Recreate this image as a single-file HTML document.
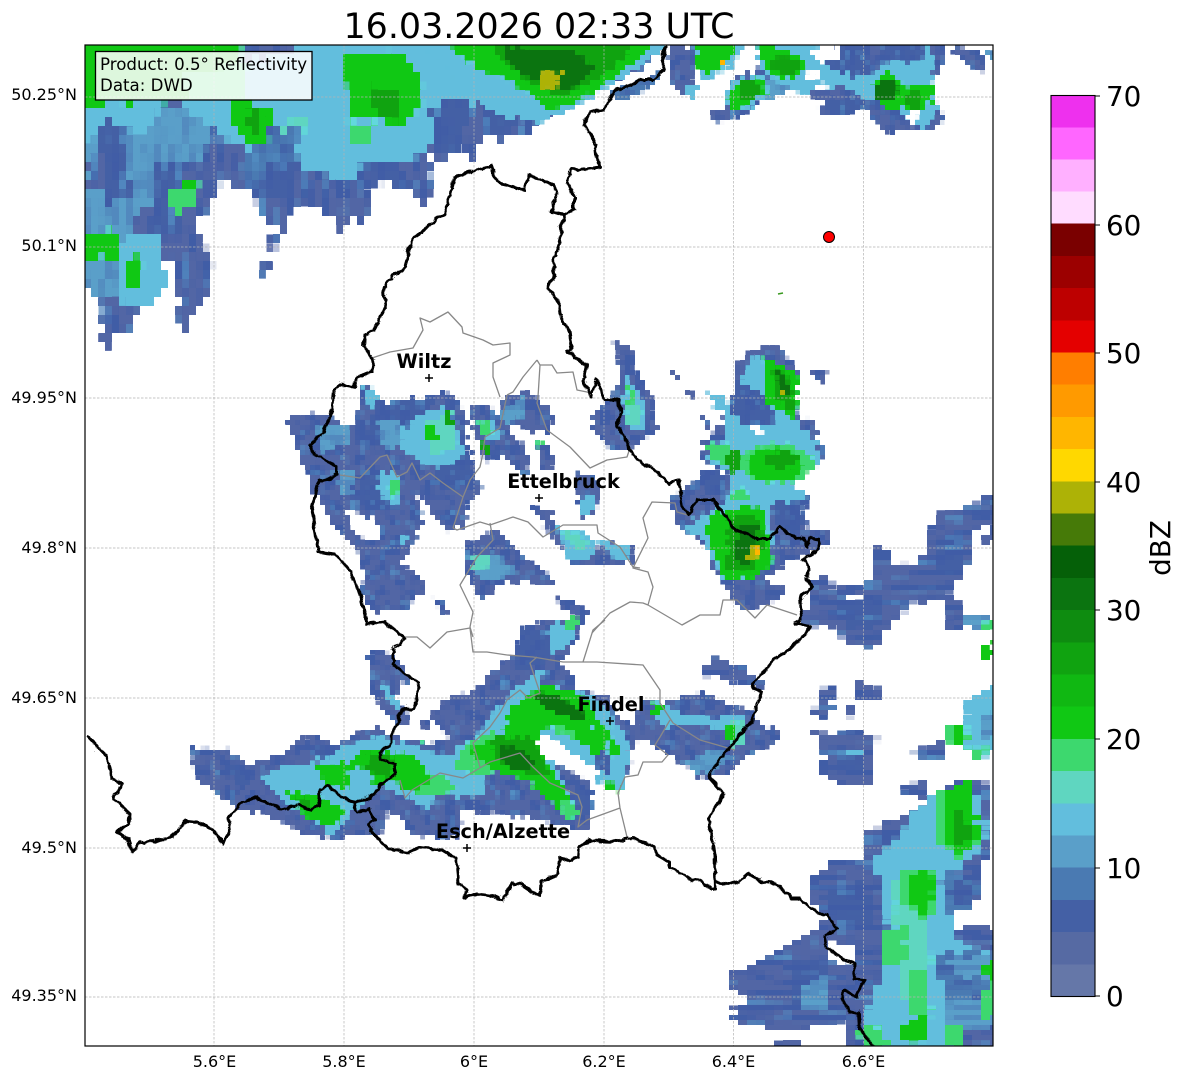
<!DOCTYPE html>
<html><head><meta charset="utf-8"><style>
html,body{margin:0;padding:0;background:#fff}
svg{display:block}
text{font-family:"DejaVu Sans",sans-serif;fill:#000}
.b{fill:#5266a5}.d{fill:#4460a5}.m{fill:#4a7ab2}.n{fill:#5a9fc9}.c{fill:#62bedd}.t{fill:#5fd6c0}
.l{fill:#3dd86e}.g{fill:#10c814}.h{fill:#10a310}.k{fill:#0b7410}.w{fill:#fff}
.y{fill:#adb206}.o{fill:#ffb600}
</style></head><body>
<svg width="1184" height="1081" viewBox="0 0 1184 1081" xmlns="http://www.w3.org/2000/svg">
<defs>
<clipPath id="ax"><rect x="85" y="45" width="908" height="1001"/></clipPath>
<filter id="wig" filterUnits="userSpaceOnUse" x="0" y="0" width="1184" height="1081" color-interpolation-filters="sRGB">
<feTurbulence type="turbulence" baseFrequency="0.09" numOctaves="1" seed="9"/>
<feDisplacementMap in="SourceGraphic" scale="5" xChannelSelector="R" yChannelSelector="G"/>
<feGaussianBlur stdDeviation=".35"/>
</filter>
<filter id="fv" filterUnits="userSpaceOnUse" x="0" y="0" width="1184" height="1081" color-interpolation-filters="sRGB">
<feTurbulence type="turbulence" baseFrequency="0.12" numOctaves="2" seed="4" result="w"/>
<feDisplacementMap in="SourceGraphic" in2="w" scale="10" xChannelSelector="R" yChannelSelector="G" result="s"/>
<feColorMatrix in="s" values="0 0 0 0 0 0 0 0 0 0 0 0 0 0 0 0 -8 8 0 -1" result="mk"/>
<feTurbulence type="fractalNoise" baseFrequency="0.14 0.035" numOctaves="1" seed="11"/>
<feColorMatrix values="0 0 0 0 .25 0 0 0 0 .36 0 0 0 0 .65 7 0 0 0 -3.3" result="n1"/>
<feTurbulence type="fractalNoise" baseFrequency="0.12 0.04" numOctaves="1" seed="23"/>
<feColorMatrix values="0 0 0 0 .33 0 0 0 0 .58 0 0 0 0 .78 5 0 0 0 -2.9" result="n2"/>
<feComposite in="n1" in2="mk" operator="in" result="a1"/>
<feComposite in="n2" in2="mk" operator="in" result="a2"/>
<feComposite in="a1" in2="s" operator="atop" result="t1"/>
<feComposite in="a2" in2="t1" operator="atop" result="t2"/>
<feFlood x="3" y="4" width="1" height="1"/>
<feComposite x="0" y="0" width="7" height="9"/>
<feTile result="a"/>
<feComposite in="t2" in2="a" operator="in"/>
<feMorphology operator="dilate" radius="3 4"/>
</filter>
<filter id="fd" filterUnits="userSpaceOnUse" x="0" y="0" width="1184" height="1081" color-interpolation-filters="sRGB">
<feTurbulence type="turbulence" baseFrequency="0.13" numOctaves="2" seed="4" result="w"/>
<feDisplacementMap in="SourceGraphic" in2="w" scale="8" xChannelSelector="R" yChannelSelector="G" result="s"/>
<feColorMatrix in="s" values="0 0 0 0 0 0 0 0 0 0 0 0 0 0 0 0 -8 8 0 -1" result="mk"/>
<feTurbulence type="fractalNoise" baseFrequency="0.09" numOctaves="1" seed="15"/>
<feColorMatrix values="0 0 0 0 .25 0 0 0 0 .36 0 0 0 0 .65 7 0 0 0 -3.3" result="n1"/>
<feTurbulence type="fractalNoise" baseFrequency="0.1" numOctaves="1" seed="31"/>
<feColorMatrix values="0 0 0 0 .33 0 0 0 0 .58 0 0 0 0 .78 5 0 0 0 -3" result="n2"/>
<feComposite in="n1" in2="mk" operator="in" result="a1"/>
<feComposite in="n2" in2="mk" operator="in" result="a2"/>
<feComposite in="a1" in2="s" operator="atop" result="t1"/>
<feComposite in="a2" in2="t1" operator="atop" result="t2"/>
<feFlood x="2" y="2" width="1" height="1"/>
<feComposite x="0" y="0" width="5" height="5"/>
<feTile result="a"/>
<feComposite in="t2" in2="a" operator="in"/>
<feMorphology operator="dilate" radius="2 2"/>
</filter>
<filter id="fh" filterUnits="userSpaceOnUse" x="0" y="0" width="1184" height="1081" color-interpolation-filters="sRGB">
<feTurbulence type="turbulence" baseFrequency="0.1" numOctaves="2" seed="7" result="w"/>
<feDisplacementMap in="SourceGraphic" in2="w" scale="9" xChannelSelector="R" yChannelSelector="G" result="s"/>
<feColorMatrix in="s" values="0 0 0 0 0 0 0 0 0 0 0 0 0 0 0 0 -8 8 0 -1" result="mk"/>
<feTurbulence type="fractalNoise" baseFrequency="0.03 0.2" numOctaves="1" seed="5"/>
<feColorMatrix values="0 0 0 0 .25 0 0 0 0 .36 0 0 0 0 .65 7 0 0 0 -3.3" result="n1"/>
<feTurbulence type="fractalNoise" baseFrequency="0.035 0.18" numOctaves="1" seed="41"/>
<feColorMatrix values="0 0 0 0 .33 0 0 0 0 .58 0 0 0 0 .78 5 0 0 0 -3" result="n2"/>
<feComposite in="n1" in2="mk" operator="in" result="a1"/>
<feComposite in="n2" in2="mk" operator="in" result="a2"/>
<feComposite in="a1" in2="s" operator="atop" result="t1"/>
<feComposite in="a2" in2="t1" operator="atop" result="t2"/>
<feFlood x="4" y="2" width="1" height="1"/>
<feComposite x="0" y="0" width="9" height="5"/>
<feTile result="a"/>
<feComposite in="t2" in2="a" operator="in"/>
<feMorphology operator="dilate" radius="4 2"/>
</filter>
</defs>
<rect width="1184" height="1081" fill="#fff"/>
<text x="539" y="38" font-size="34.85" text-anchor="middle">16.03.2026 02:33 UTC</text>

<g clip-path="url(#ax)">
<g filter="url(#fv)">
<!-- Top-left mass -->
<polygon class="b" points="70,30 680,30 640,62 600,85 580,90 527,128 510,135 477,140 470,162 450,133 443,157 427,153 430,187 427,203 418,202 405,185 393,178 363,183 370,213 363,222 345,213 340,230 313,203 290,203 280,237 268,253 262,278 255,280 267,247 280,220 262,220 250,188 237,188 220,177 213,197 192,220 197,240 203,230 210,273 205,293 192,310 185,332 178,330 172,253 163,257 150,300 135,313 133,325 110,330 110,343 100,342 98,293 86,282 70,282"/>
<polygon class="w" points="123,120 147,122 146,138 132,143 124,140"/>
<polygon class="n" points="70,110 170,105 210,125 200,150 160,190 130,225 130,280 100,295 70,280"/>
<polygon class="c" points="120,230 160,235 165,285 135,312 120,300 115,260"/>
<polygon class="c" points="70,100 160,100 150,125 100,140 70,130"/>
<polygon class="d" points="100,120 130,125 120,160 135,190 105,200 95,160"/>
<polygon class="d" points="150,160 185,160 180,230 150,230"/>
<polygon class="b" points="85,150 100,150 105,190 85,190"/>
<polygon class="c" points="180,100 240,60 312,45 470,40 500,70 480,100 455,115 430,145 415,150 395,165 340,175 310,170 280,150 250,150 210,125"/>
<polygon class="t" points="280,120 305,118 300,140 282,142"/>
<polygon class="m" points="265,125 300,130 285,175 250,190 235,165"/>
<polygon class="d" points="262,160 295,155 290,195 250,195"/>
<polygon class="d" points="355,160 395,160 420,190 380,180"/>
<polygon class="d" points="430,110 450,95 470,100 455,150 435,150"/>
<polygon class="d" points="480,115 510,105 515,125 480,138"/>
<polygon class="l" points="345,118 372,122 368,140 350,140"/>
<polygon class="g" points="340,50 395,48 420,75 420,105 390,125 375,115 350,110 345,85"/>
<polygon class="h" points="365,80 400,95 395,120 370,110"/>
<polygon class="g" points="230,95 270,105 265,150 235,135"/>
<polygon class="h" points="245,105 260,110 255,130 245,125"/>
<polygon class="g" points="70,228 115,228 115,255 70,255"/>
<polygon class="g" points="125,260 140,250 140,285 125,285"/>
<polygon class="l" points="195,170 190,205 170,215 165,190"/>
<polygon class="g" points="180,175 200,175 195,190 180,188"/>
<!-- green under legend -->
<polygon class="g" points="70,30 240,30 235,70 180,98 95,102 70,110"/>
<polygon class="l" points="180,70 250,60 240,95 190,100"/>
</g>
<g filter="url(#fd)">
<!-- top dark band -->
<polygon class="c" points="395,30 680,30 630,70 590,95 540,120 510,118 475,100 440,60"/>
<polygon class="g" points="430,30 660,30 640,55 600,85 575,100 545,108 510,80 480,70"/>
<polygon class="h" points="490,30 640,30 620,60 590,80 560,95 525,80 495,55"/>
<polygon class="k" points="500,45 570,48 595,68 570,88 530,78 505,62"/>
<polygon class="y" points="535,72 562,70 558,82 540,88"/>
<polygon class="m" points="610,90 650,75 660,65 650,85 620,100"/>
<polygon class="b" points="668,45 700,45 690,75 695,90 685,95 665,78"/>
<polygon class="c" points="680,80 698,82 692,95 685,93"/>
<polygon class="c" points="690,40 745,40 725,70 700,78"/>
<polygon class="g" points="695,40 735,40 730,58 710,72 695,65"/>
<circle class="o" cx="719" cy="61" r="3.5"/>
<!-- top right -->
<polygon class="b" points="755,35 940,35 945,60 930,77 933,100 945,120 920,130 903,125 893,133 880,125 860,103 838,115 812,110 823,100 810,98 808,87 787,83 773,95 767,90 747,110 733,115 712,120 710,110 723,107 723,93 733,73 757,70"/>
<polygon class="c" points="755,35 850,35 870,70 890,60 930,40 930,75 935,110 920,130 905,118 885,90 870,100 840,85 800,90 770,80 758,70"/>
<polygon class="d" points="815,40 865,40 870,70 850,75 820,60"/>
<polygon class="d" points="880,38 925,48 920,60 885,60"/>
<polygon class="w" points="810,48 838,45 838,60 815,60"/>
<polygon class="w" points="802,70 818,68 815,75 803,76"/>
<polygon class="w" points="812,85 823,80 825,85 815,90"/>
<polygon class="d" points="825,95 870,100 845,113 820,110"/>
<polygon class="n" points="760,75 790,85 775,97 755,95"/>
<polygon class="g" points="755,40 790,50 805,65 785,80 765,70"/>
<ellipse class="h" cx="783" cy="64" rx="16" ry="9"/>
<polygon class="c" points="730,80 760,72 768,90 745,108 725,105 722,95"/>
<polygon class="g" points="737,80 760,75 765,92 748,100 730,110 725,95"/>
<ellipse class="h" cx="748" cy="88" rx="10" ry="10"/>
<polygon class="g" points="870,80 887,70 905,85 935,80 930,100 915,110 905,105 890,110 872,95"/>
<ellipse class="k" cx="885" cy="88" rx="12" ry="12"/>
<ellipse class="h" cx="912" cy="98" rx="8" ry="10"/>
<polygon class="w" points="905,110 915,108 912,125 905,120"/>
<polygon class="d" points="960,45 978,52 985,68 972,70"/>
<polygon class="b" points="945,45 962,47 980,62 982,70 965,62"/>
<polygon class="n" points="985,45 995,55 992,62 982,48"/>
<!-- West/Centre blob -->
<polygon class="b" points="285,417 325,412 345,425 355,420 358,383 368,382 383,400 407,400 440,390 457,397 465,420 465,453 480,487 467,500 463,523 443,530 427,503 413,490 423,523 407,547 397,560 427,583 400,603 373,610 357,587 367,577 353,547 330,520 310,487 300,457"/>
<polygon class="w" points="345,505 358,510 380,528 375,540 362,535 350,530"/>
<polygon class="d" points="375,400 420,400 440,395 420,412 390,440 355,450"/>
<polygon class="d" points="355,465 400,475 395,510 360,500"/>
<polygon class="d" points="430,450 470,450 470,485 435,490"/>
<polygon class="c" points="390,437 420,413 443,403 457,430 463,453 440,467 413,457"/>
<polygon class="t" points="425,420 450,410 455,445 430,455"/>
<polygon class="n" points="375,420 395,415 400,440 385,450"/>
<polygon class="g" points="422,425 433,420 436,435 425,438"/>
<polygon class="h" points="443,410 450,412 450,425 445,425"/>
<polygon class="n" points="315,425 345,425 348,440 320,450"/>
<polygon class="n" points="335,470 350,468 350,490 338,492"/>
<polygon class="c" points="375,470 395,470 400,500 382,505"/>
<polygon class="l" points="385,480 395,480 397,492 388,495"/>
<polygon class="c" points="362,385 372,385 378,400 368,405"/>
<polygon class="c" points="398,535 404,532 404,542 399,540"/>
<polygon class="b" points="355,586 395,585 430,582 405,605 372,612"/>
<polygon class="b" points="430,597 440,596 447,608 440,612"/>
<!-- Centre -->
<polygon class="b" points="497,400 525,388 553,413 547,430 527,430 507,420"/>
<polygon class="n" points="497,408 522,395 525,415 500,420"/>
<polygon class="b" points="468,400 490,405 505,425 530,455 525,475 502,452 483,460 470,425"/>
<polygon class="c" points="474,418 490,418 500,432 488,440"/>
<polygon class="l" points="475,420 485,422 490,432 480,432"/>
<polygon class="h" points="479,442 485,442 488,454 482,454"/>
<polygon class="b" points="533,440 548,445 552,465 542,470"/>
<polygon class="l" points="535,440 542,442 541,450 536,448"/>
<polygon class="b" points="527,503 547,507 560,530 580,553 610,540 630,543 633,560 613,563 573,563 547,530"/>
<polygon class="c" points="555,525 580,530 595,545 585,560 565,555"/>
<polygon class="t" points="560,530 575,530 590,545 575,548"/>
<polygon class="c" points="597,540 625,542 630,555 610,556"/>
<polygon class="b" points="574,473 590,472 600,490 595,510 582,520 575,500"/>
<polygon class="c" points="577,500 590,490 594,505 582,515"/>
<polygon class="b" points="463,543 493,527 513,547 547,573 557,587 533,580 500,580 480,600 463,570"/>
<polygon class="n" points="468,555 490,550 515,570 490,580 475,575"/>
<polygon class="t" points="470,555 485,553 488,565 472,568"/>
<polygon class="b" points="553,595 570,597 587,610 582,615 560,605"/>
<!-- Column near border -->
<polygon class="b" points="612,338 628,345 635,372 650,395 655,430 632,442 622,450 605,445 590,425 590,410 610,395 618,370"/>
<polygon class="c" points="622,370 640,395 645,425 630,432 620,410"/>
<polygon class="t" points="625,385 640,410 635,425 625,420"/>
<polygon class="l" points="625,382 635,392 632,405 625,400"/>
<polygon class="b" points="668,367 680,375 678,378 668,372"/>
<polygon class="b" points="684,387 693,392 691,395 683,391"/>
<polygon class="c" points="704,390 720,392 727,405 714,408"/>
<polygon class="b" points="698,412 703,412 708,424 703,426"/>
<polygon class="b" points="807,367 824,366 827,380 815,380"/>
<!-- East storm -->
<polygon class="b" points="770,342 787,355 798,373 790,397 800,417 813,420 817,440 823,443 817,462 810,467 787,483 810,493 800,510 803,527 828,530 827,543 783,560 777,570 757,577 757,590 773,600 737,607 723,587 720,577 707,563 710,547 677,525 672,513 668,495 703,473 730,473 698,457 703,440 713,430 725,410 733,390 732,363 750,350"/>
<polygon class="c" points="753,353 797,373 793,417 817,443 817,462 787,483 807,493 797,500 767,503 773,530 770,560 747,580 720,577 713,560 703,540 680,527 707,510 722,500 733,473 700,457 723,437 723,413 733,390"/>
<polygon class="d" points="733,375 765,395 775,420 750,425 728,412"/>
<polygon class="d" points="700,470 725,470 720,495 700,495"/>
<polygon class="d" points="770,495 800,505 805,525 775,525"/>
<polygon class="w" points="750,424 762,422 760,432 752,432"/>
<polygon class="g" points="760,353 797,373 793,418 763,400 763,373"/>
<polygon class="h" points="770,362 790,380 790,412 775,395"/>
<polygon class="k" points="775,365 785,378 788,395 775,385"/>
<circle class="y" cx="781" cy="390" r="3.5"/>
<polygon class="l" points="705,440 725,440 730,465 705,458"/>
<ellipse class="h" cx="732" cy="458" rx="9" ry="12"/>
<ellipse class="l" cx="775" cy="462" rx="36" ry="20"/>
<ellipse class="g" cx="773" cy="463" rx="28" ry="17"/>
<ellipse class="h" cx="780" cy="458" rx="16" ry="9"/>
<polygon class="l" points="728,490 745,484 745,497 730,500"/>
<polygon class="g" points="707,513 747,503 763,510 767,537 770,563 747,578 722,578 713,557 703,527"/>
<polygon class="h" points="725,515 755,512 765,540 750,572 725,565"/>
<polygon class="k" points="738,525 758,525 755,550 745,565 730,558"/>
<rect class="y" x="748" y="545" width="9" height="13"/>
<circle class="o" cx="754" cy="550" r="2.5"/>
<polygon class="b" points="745,580 760,575 785,590 773,600 737,607 723,587"/>
<!-- Southern band -->
<polygon class="b" points="188,745 227,748 247,763 280,753 297,740 307,732 330,743 353,733 377,725 400,737 423,742 447,735 427,717 443,698 473,687 513,650 530,620 582,615 573,643 557,660 573,677 573,687 603,693 620,720 633,723 653,733 627,747 630,763 620,787 597,777 587,783 587,833 567,823 527,817 490,810 483,813 460,807 457,837 440,827 447,837 413,833 387,807 380,830 353,833 330,837 300,830 260,810 240,810 195,777 190,763"/>
<polygon class="d" points="520,625 560,625 550,660 510,670"/>
<polygon class="d" points="220,760 255,770 240,790"/>
<polygon class="d" points="300,738 335,748 320,760"/>
<polygon class="c" points="260,777 280,763 310,762 347,743 380,733 413,747 447,753 473,733 513,687 540,663 540,683 573,687 597,700 627,737 627,763 620,787 597,780 583,767 547,753 577,810 550,787 480,763 483,793 453,797 440,773 427,807 380,783 353,807 333,833 307,820"/>
<polygon class="c" points="545,622 578,617 565,645 550,650"/>
<polygon class="l" points="562,617 580,616 572,630 565,630"/>
<polygon class="l" points="465,740 490,728 505,760 480,775 450,765"/>
<polygon class="l" points="405,765 440,772 455,785 430,795 410,790"/>
<polygon class="g" points="310,763 347,760 363,748 380,750 413,753 430,777 413,793 390,780 367,783 347,787 327,783"/>
<polygon class="c" points="345,770 365,762 372,780 350,785"/>
<polygon class="h" points="365,750 395,755 388,775 365,770"/>
<polygon class="g" points="283,790 310,790 330,800 350,810 330,822 305,818"/>
<polygon class="h" points="290,795 305,795 310,805 295,805"/>
<polygon class="g" points="540,683 580,692 597,720 583,747 567,733 540,725 535,745 550,767 570,800 557,807 527,780 490,767 463,747 500,733 507,707 530,690"/>
<polygon class="c" points="548,722 575,730 570,742 545,735"/>
<polygon class="l" points="552,722 572,728 570,737 552,732"/>
<polygon class="h" points="490,735 530,735 548,770 530,775 495,760"/>
<ellipse class="k" cx="514" cy="757" rx="20" ry="10" transform="rotate(25 514 757)"/>
<ellipse class="k" cx="560" cy="705" rx="28" ry="8" transform="rotate(25 560 705)"/>
<polygon class="c" points="585,725 615,730 625,760 620,785 600,775 590,755"/>
<polygon class="d" points="592,745 608,752 605,770 592,765"/>
<polygon class="g" points="590,722 610,727 600,750 585,750"/>
<polygon class="g" points="608,735 618,745 612,757 604,750"/>
<polygon class="g" points="603,778 620,785 617,790 603,787"/>
<polygon class="l" points="558,800 570,800 578,810 565,818"/>
<polygon class="d" points="575,780 590,785 590,815 572,805"/>
<polygon class="w" points="536,733 545,735 597,768 592,782 545,757 535,745"/>
<polygon class="b" points="367,650 385,648 400,665 415,685 400,680 392,700 410,715 395,725 370,690 366,672"/>
<polygon class="c" points="380,680 395,695 398,710 385,700"/>
<polygon class="b" points="415,712 425,720 430,730 420,725"/>
<polygon class="l" points="415,735 422,738 424,742 416,740"/>
<!-- east of Findel -->
<polygon class="b" points="637,697 660,700 700,690 747,710 777,733 777,740 750,753 723,773 697,775 673,757 653,743 633,723"/>
<polygon class="c" points="655,700 690,715 740,715 750,730 720,730 690,722 665,725 645,712"/>
<polygon class="n" points="680,760 715,745 730,755 710,770 690,770"/>
<polygon class="t" points="725,720 742,718 742,745 728,745"/>
<polygon class="g" points="724,725 734,725 734,738 725,738"/>
<polygon class="g" points="650,702 660,702 660,716 650,716"/>
</g>
<g filter="url(#fh)">
<polygon class="b" points="710,655 735,660 745,668 760,680 755,687 697,672"/>
<!-- East band -->
<polygon class="b" points="800,613 813,577 828,573 830,587 867,577 873,547 893,547 887,563 917,560 927,530 937,510 967,503 992,492 1000,492 1000,517 973,527 967,557 963,570 947,587 962,613 962,630 947,627 943,597 910,600 887,630 870,645 850,643 833,627 800,623"/>
<polygon class="w" points="848,591 865,590 866,600 850,600"/>
<polygon class="d" points="940,540 965,535 960,565 935,570"/>
<polygon class="d" points="830,600 880,590 880,625 845,625"/>
<polygon class="n" points="961,615 985,610 990,622 970,628"/>
<polygon class="l" points="982,622 992,615 992,625 984,628"/>
<polygon class="b" points="983,527 995,527 995,543 985,543"/>
<polygon class="g" points="982,645 995,640 995,655 984,655"/>
<!-- scattered east -->
<polygon class="b" points="822,683 830,683 830,716 812,718 815,700"/>
<polygon class="b" points="855,680 880,685 882,698 855,696"/>
<polygon class="b" points="845,702 852,702 852,716 840,714"/>
<polygon class="b" points="810,730 835,733 850,725 875,735 868,760 875,770 867,785 840,780 815,775 825,745"/>
<polygon class="d" points="835,745 865,745 862,770 835,770"/>
<rect class="c" x="847" y="748" width="10" height="4"/>
<polygon class="b" points="912,748 945,735 945,755 915,760"/>
<polygon class="l" points="943,725 965,722 967,748 947,745"/>
<polygon class="g" points="951,724 963,724 965,745 955,745"/>
<polygon class="c" points="965,700 998,680 998,750 975,758 965,745"/>
<polygon class="n" points="975,715 998,710 998,735 978,735"/>
<polygon class="l" points="965,748 985,745 980,755 968,757"/>
<polygon class="b" points="900,785 925,780 925,795 905,795"/>
<!-- SE big storm -->
<polygon class="b" points="860,830 870,827 917,807 933,790 957,777 973,777 985,780 987,813 990,847 980,863 980,893 950,913 998,920 998,1060 843,1060 843,1020 800,1030 735,1023 733,1007 750,995 725,987 725,973 740,967 780,947 823,920 823,913 807,897 807,880 830,860 860,857"/>
<polygon class="w" points="950,913 998,906 998,925 952,925"/>
<polygon class="w" points="827,942 853,942 853,960 830,962"/>
<polygon class="w" points="800,1028 843,1022 843,1060 800,1060"/>
<polygon class="b" points="773,1040 800,1040 800,1050 773,1050"/>
<polygon class="d" points="820,885 865,880 870,925 830,925"/>
<polygon class="d" points="795,960 830,960 820,1000 790,1005"/>
<polygon class="n" points="795,985 830,975 825,1005 800,1005"/>
<polygon class="c" points="893,837 917,807 933,793 973,787 987,823 977,847 940,880 953,940 990,947 998,1060 863,1060 860,1020 887,947 880,893 873,860"/>
<polygon class="m" points="930,950 998,950 998,1000 967,1005 940,990"/>
<polygon class="n" points="940,995 998,1000 998,1040 950,1040"/>
<polygon class="b" points="955,1030 998,1025 998,1050 960,1050"/>
<polygon class="m" points="943,870 977,880 967,907 947,913"/>
<polygon class="d" points="955,880 970,885 960,905 950,900"/>
<polygon class="n" points="945,955 990,955 985,975 950,975"/>
<polygon class="t" points="890,880 915,872 925,920 930,960 915,1000 898,1000 895,950"/>
<polygon class="l" points="937,790 970,777 978,840 957,857 933,837"/>
<polygon class="g" points="940,792 970,777 978,835 955,855 940,825"/>
<polygon class="h" points="950,805 962,805 970,835 955,845"/>
<polygon class="l" points="895,870 930,865 935,905 925,920 895,900"/>
<polygon class="g" points="905,872 930,870 932,900 923,917 910,900"/>
<polygon class="l" points="878,930 905,925 905,960 882,965"/>
<polygon class="l" points="907,968 925,968 928,1012 908,1012"/>
<polygon class="g" points="897,1020 915,1015 928,1010 925,1040 900,1042"/>
<polygon class="l" points="855,1025 880,1025 888,1045 860,1048"/>
<polygon class="l" points="945,1025 960,1025 958,1045 945,1045"/>
<polygon class="g" points="983,960 998,960 998,1000 988,990"/>
<polygon class="l" points="980,985 998,985 998,1018 982,1015"/>
</g>
</g>

<!-- grid -->
<g stroke="#b4b4b4" stroke-width=".7" stroke-dasharray="2.5,1.5" fill="none">
<path d="M214 45V1046M344 45V1046M474 45V1046M604 45V1046M733.5 45V1046M863.5 45V1046"/>
<path d="M85 97H993M85 247H993M85 398H993M85 548H993M85 698H993M85 848H993M85 997H993"/>
</g>

<!-- gray boundaries -->
<g clip-path="url(#ax)" fill="none" stroke="#888" stroke-width="1.3" stroke-linejoin="round">
<path d="M372 358L390 352 413 348 423 330 420 318 430 322 448 312 462 327 463 333 483 340 493 345 510 343 510 355 493 363 493 377 500 397"/>
<path d="M537 360L523 377 513 392 507 395M537 360L540 365 552 365 557 373 573 372 577 390 592 393M540 365L538 397 537 403 547 430 570 447 590 468 607 460 627 457 630 448"/>
<path d="M340 475L360 478 380 457 387 455 397 477 407 472 412 463 420 480 430 473 443 483 463 497 470 480 480 467 483 453 485 437 500 428 507 395"/>
<path d="M453 528L457 530 480 522 490 525 513 517 528 522 543 537 563 525 597 525 598 533 620 547 633 567 640 568"/>
<path d="M463 497L453 528M490 523L493 540 477 557 460 585 473 612 470 627 473 637M470 628L473 652 487 652 507 655M470 628L447 632 430 648 417 637 403 637"/>
<path d="M592 633L610 613 630 602 643 603 648 605 682 625 700 615 720 615 723 600 737 600 755 618 767 605 797 615M648 605L653 587 648 572 633 568 648 538 643 518 652 502 675 503 677 512 688 515"/>
<path d="M507 655L533 657 563 662 583 662 593 630 605 620M583 662L597 662 643 665 660 690 660 703 673 723 700 740 735 750M670 720L660 737 655 745 668 755 662 762 643 762 638 775 625 777 618 793 620 808 627 837M620 808L587 820 578 827 582 807 578 795 550 783 533 767 520 753 490 762 463 778 440 773 412 790 405 798 400 780"/>
<path d="M480 767L473 743 490 727 500 713 507 700 520 690 528 698 540 693 530 663 537 657"/>
</g>

<!-- black boundaries -->
<g clip-path="url(#ax)">
<g filter="url(#wig)" fill="none" stroke="#000" stroke-width="3" stroke-linejoin="round" stroke-linecap="round">
<path d="M603 398L617 398 620 410 615 425 623 435 627 448 642 463 653 468 668 482 677 478 682 508 688 512 695 498 712 498 733 528 747 532 753 537 768 537 778 525 790 535 803 538 805 545 808 535 817 538 817 547 802 558 808 568 805 577 810 585 798 597 800 615 795 622 808 625 802 633 787 648 772 657 750 685 760 690 750 720 718 757 707 775 722 792 707 817 713 853 714 887 710 887 698 878 692 880 682 872 667 866 667 860 655 853 653 845 630 836 615 840 588 839 577 845 576 855 568 859 558 856 555 873 539 880 538 895 520 883 510 882 501 899 490 894 475 892 462 896 465 888 457 882 455 857 440 848 417 846 405 851 385 846 370 830 367 823 373 818 368 807 355 811 352 805 353 800 337 793 327 785 318 788 317 805 308 808 298 803 280 808 253 795 237 803 227 817 228 827 222 842 210 827 195 820 185 819 170 835 152 840 140 841 130 850 127 838 116 830 127 822 128 812 112 797 120 782 110 777 105 755 86 735"/>
<path d="M353 800L367 797 380 783 393 772 393 762 380 757 378 752 390 742 390 733 397 720 399 709 413 707 417 682 392 663 392 648 403 637 383 620 365 622 360 597 347 567 333 552 317 550 313 527 310 508 313 495 317 479 328 477 335 472 335 465 310 450 308 443 322 430 330 410 332 388 340 383 353 385 355 375 370 370 372 358 362 345 363 333 373 327 384 303 383 285 392 273 402 268 410 240 413 235 443 212 453 175 490 164 495 180 523 188 527 173 552 183 555 190 550 210 563 212 558 240 552 257 553 273 547 287 558 303 560 320 567 327 570 348 565 350 585 363 582 377 590 395 595 378 603 398"/>
<path d="M563 213L573 207 573 195 565 180 570 167 578 168 598 165 595 157 593 138 582 123 588 110 603 108 612 90 640 78 652 78 662 68 660 60 665 45"/>
<path d="M714 880L727 883 737 880 747 871 758 880 775 882 790 897 798 897 817 912 825 913 835 927 823 935 825 945 837 955 853 962 852 977 863 978 855 995 842 988 840 997 848 1010 857 1012 858 1028 873 1045"/>
</g>
</g>

<!-- cities -->
<g font-weight="700" font-size="19.3" text-anchor="middle">
<text x="424" y="368">Wiltz</text>
<text x="563.5" y="488">Ettelbruck</text>
<text x="611" y="711">Findel</text>
<text x="503" y="838">Esch/Alzette</text>
</g>
<path d="M425 378h8M429 374v8M535 498h8M539 494v8M606 721h8M610 717v8M463 848h8M467 844v8" stroke="#000" stroke-width="1.5"/>
<circle cx="829" cy="237" r="5.5" fill="#f00" stroke="#000" stroke-width="1"/>
<path d="M778 294l5-1" stroke="#3a9a20" stroke-width="1.6"/>

<!-- legend -->
<rect x="95.5" y="51.5" width="216.5" height="48.5" fill="#fff" fill-opacity=".86" stroke="#000" stroke-width="1.3"/>
<text x="100" y="70" font-size="16.65">Product: 0.5° Reflectivity</text>
<text x="100" y="91" font-size="16.65">Data: DWD</text>

<rect x="85" y="45" width="908" height="1001" fill="none" stroke="#000" stroke-width="1.2"/>

<!-- tick labels -->
<g font-size="16" text-anchor="middle">
<text x="214.5" y="1067">5.6°E</text><text x="344" y="1067">5.8°E</text><text x="474" y="1067">6°E</text><text x="604" y="1067">6.2°E</text><text x="733.5" y="1067">6.4°E</text><text x="863.5" y="1067">6.6°E</text>
</g>
<g font-size="16" text-anchor="end">
<text x="77" y="100">50.25°N</text><text x="77" y="251">50.1°N</text><text x="77" y="403">49.95°N</text><text x="77" y="553">49.8°N</text><text x="77" y="703">49.65°N</text><text x="77" y="853">49.5°N</text><text x="77" y="1001">49.35°N</text>
</g>

<!-- colorbar -->
<g shape-rendering="crispEdges">
<rect x="1051" y="964.3" width="44" height="32.2" fill="#6577a8"/><rect x="1051" y="932.1" width="44" height="32.2" fill="#566aa3"/><rect x="1051" y="899.9" width="44" height="32.2" fill="#4460a5"/><rect x="1051" y="867.7" width="44" height="32.2" fill="#4a7ab2"/><rect x="1051" y="835.5" width="44" height="32.2" fill="#5a9fc9"/><rect x="1051" y="803.3" width="44" height="32.2" fill="#62bedd"/><rect x="1051" y="771.1" width="44" height="32.2" fill="#5fd6c0"/><rect x="1051" y="738.9" width="44" height="32.2" fill="#3dd86e"/><rect x="1051" y="706.7" width="44" height="32.2" fill="#10c814"/><rect x="1051" y="674.5" width="44" height="32.2" fill="#10b812"/><rect x="1051" y="642.3" width="44" height="32.2" fill="#10a310"/><rect x="1051" y="610.1" width="44" height="32.2" fill="#0e8c10"/><rect x="1051" y="577.9" width="44" height="32.2" fill="#0b7410"/><rect x="1051" y="545.7" width="44" height="32.2" fill="#056008"/><rect x="1051" y="513.5" width="44" height="32.2" fill="#467a08"/><rect x="1051" y="481.3" width="44" height="32.2" fill="#adb206"/><rect x="1051" y="449.1" width="44" height="32.2" fill="#ffd800"/><rect x="1051" y="416.9" width="44" height="32.2" fill="#ffb600"/><rect x="1051" y="384.7" width="44" height="32.2" fill="#ff9a00"/><rect x="1051" y="352.5" width="44" height="32.2" fill="#ff7e00"/><rect x="1051" y="320.3" width="44" height="32.2" fill="#e40000"/><rect x="1051" y="288.1" width="44" height="32.2" fill="#bd0000"/><rect x="1051" y="255.9" width="44" height="32.2" fill="#9c0000"/><rect x="1051" y="223.7" width="44" height="32.2" fill="#7a0000"/><rect x="1051" y="191.5" width="44" height="32.2" fill="#ffdcff"/><rect x="1051" y="159.3" width="44" height="32.2" fill="#ffb0ff"/><rect x="1051" y="127.1" width="44" height="32.2" fill="#ff66ff"/><rect x="1051" y="95.5" width="44" height="31.8" fill="#ee30ee"/>
</g>
<rect x="1051" y="95.5" width="44" height="901" fill="none" stroke="#000" stroke-width="1.1"/>
<path d="M1095 96h5M1095 225h5M1095 353h5M1095 482h5M1095 610h5M1095 739h5M1095 868h5M1095 996h5" stroke="#000" stroke-width="1.1"/>
<g font-size="27.8">
<text x="1106" y="106">70</text><text x="1106" y="235">60</text><text x="1106" y="363">50</text><text x="1106" y="492">40</text><text x="1106" y="620">30</text><text x="1106" y="749">20</text><text x="1106" y="878">10</text><text x="1106" y="1006">0</text>
</g>
<text transform="translate(1170 548) rotate(-90)" font-size="27.8" text-anchor="middle">dBZ</text>
</svg>
</body></html>
